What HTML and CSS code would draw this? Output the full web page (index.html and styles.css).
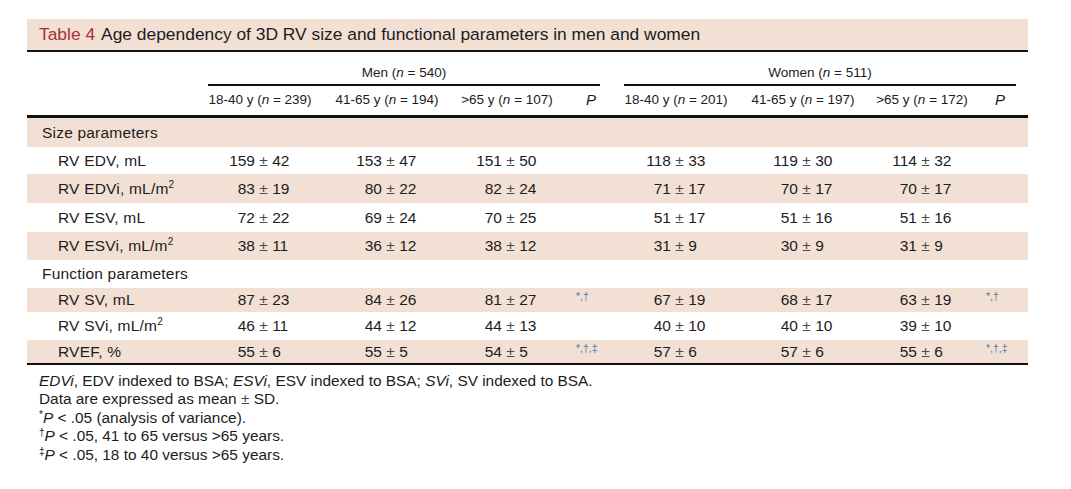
FILE: index.html
```html
<!DOCTYPE html>
<html lang="en">
<head>
<meta charset="utf-8">
<title>Table 4</title>
<link rel="stylesheet" href="styles.css">
</head>
<body>
<div class="page">
  <div class="title"><span class="tno">Table 4</span>Age dependency of 3D RV size and functional parameters in men and women</div>

  <div class="grid groups">
    <div></div>
    <div class="g men">Men (<i>n</i> = 540)</div>
    <div class="g women">Women (<i>n</i> = 511)</div>
  </div>

  <div class="grid subs">
    <div></div>
    <div>18-40 y (<i>n</i> = 239)</div>
    <div>41-65 y (<i>n</i> = 194)</div>
    <div>&gt;65 y (<i>n</i> = 107)</div>
    <div class="ph"><i>P</i></div>
    <div>18-40 y (<i>n</i> = 201)</div>
    <div>41-65 y (<i>n</i> = 197)</div>
    <div>&gt;65 y (<i>n</i> = 172)</div>
    <div class="ph"><i>P</i></div>
  </div>

  <div class="grid row band h29"><div class="sec">Size parameters</div></div>

  <div class="grid row h27">
    <div class="lbl">RV EDV, mL</div>
    <div class="c"><span class="v"><span class="l">159</span> <span class="pm">±</span> 42</span></div>
    <div class="c"><span class="v"><span class="l">153</span> <span class="pm">±</span> 47</span></div>
    <div class="c"><span class="v"><span class="l">151</span> <span class="pm">±</span> 50</span></div>
    <div></div>
    <div class="c"><span class="v"><span class="l">118</span> <span class="pm">±</span> 33</span></div>
    <div class="c"><span class="v"><span class="l">119</span> <span class="pm">±</span> 30</span></div>
    <div class="c"><span class="v"><span class="l">114</span> <span class="pm">±</span> 32</span></div>
    <div></div>
  </div>

  <div class="grid row band h29">
    <div class="lbl">RV EDVi, mL/m<sup>2</sup></div>
    <div class="c"><span class="v"><span class="l">83</span> <span class="pm">±</span> 19</span></div>
    <div class="c"><span class="v"><span class="l">80</span> <span class="pm">±</span> 22</span></div>
    <div class="c"><span class="v"><span class="l">82</span> <span class="pm">±</span> 24</span></div>
    <div></div>
    <div class="c"><span class="v"><span class="l">71</span> <span class="pm">±</span> 17</span></div>
    <div class="c"><span class="v"><span class="l">70</span> <span class="pm">±</span> 17</span></div>
    <div class="c"><span class="v"><span class="l">70</span> <span class="pm">±</span> 17</span></div>
    <div></div>
  </div>

  <div class="grid row h29">
    <div class="lbl">RV ESV, mL</div>
    <div class="c"><span class="v"><span class="l">72</span> <span class="pm">±</span> 22</span></div>
    <div class="c"><span class="v"><span class="l">69</span> <span class="pm">±</span> 24</span></div>
    <div class="c"><span class="v"><span class="l">70</span> <span class="pm">±</span> 25</span></div>
    <div></div>
    <div class="c"><span class="v"><span class="l">51</span> <span class="pm">±</span> 17</span></div>
    <div class="c"><span class="v"><span class="l">51</span> <span class="pm">±</span> 16</span></div>
    <div class="c"><span class="v"><span class="l">51</span> <span class="pm">±</span> 16</span></div>
    <div></div>
  </div>

  <div class="grid row band h28">
    <div class="lbl">RV ESVi, mL/m<sup>2</sup></div>
    <div class="c"><span class="v"><span class="l">38</span> <span class="pm">±</span> 11</span></div>
    <div class="c"><span class="v"><span class="l">36</span> <span class="pm">±</span> 12</span></div>
    <div class="c"><span class="v"><span class="l">38</span> <span class="pm">±</span> 12</span></div>
    <div></div>
    <div class="c"><span class="v"><span class="l">31</span> <span class="pm">±</span> 9</span></div>
    <div class="c"><span class="v"><span class="l">30</span> <span class="pm">±</span> 9</span></div>
    <div class="c"><span class="v"><span class="l">31</span> <span class="pm">±</span> 9</span></div>
    <div></div>
  </div>

  <div class="grid row h28"><div class="sec">Function parameters</div></div>

  <div class="grid row band h24">
    <div class="lbl">RV SV, mL</div>
    <div class="c"><span class="v"><span class="l">87</span> <span class="pm">±</span> 23</span></div>
    <div class="c"><span class="v"><span class="l">84</span> <span class="pm">±</span> 26</span></div>
    <div class="c"><span class="v"><span class="l">81</span> <span class="pm">±</span> 27</span></div>
    <div class="p">*,†</div>
    <div class="c"><span class="v"><span class="l">67</span> <span class="pm">±</span> 19</span></div>
    <div class="c"><span class="v"><span class="l">68</span> <span class="pm">±</span> 17</span></div>
    <div class="c"><span class="v"><span class="l">63</span> <span class="pm">±</span> 19</span></div>
    <div class="p">*,†</div>
  </div>

  <div class="grid row h28">
    <div class="lbl">RV SVi, mL/m<sup>2</sup></div>
    <div class="c"><span class="v"><span class="l">46</span> <span class="pm">±</span> 11</span></div>
    <div class="c"><span class="v"><span class="l">44</span> <span class="pm">±</span> 12</span></div>
    <div class="c"><span class="v"><span class="l">44</span> <span class="pm">±</span> 13</span></div>
    <div></div>
    <div class="c"><span class="v"><span class="l">40</span> <span class="pm">±</span> 10</span></div>
    <div class="c"><span class="v"><span class="l">40</span> <span class="pm">±</span> 10</span></div>
    <div class="c"><span class="v"><span class="l">39</span> <span class="pm">±</span> 10</span></div>
    <div></div>
  </div>

  <div class="grid row band h23 last">
    <div class="lbl">RVEF, %</div>
    <div class="c"><span class="v"><span class="l">55</span> <span class="pm">±</span> 6</span></div>
    <div class="c"><span class="v"><span class="l">55</span> <span class="pm">±</span> 5</span></div>
    <div class="c"><span class="v"><span class="l">54</span> <span class="pm">±</span> 5</span></div>
    <div class="p">*,†,‡</div>
    <div class="c"><span class="v"><span class="l">57</span> <span class="pm">±</span> 6</span></div>
    <div class="c"><span class="v"><span class="l">57</span> <span class="pm">±</span> 6</span></div>
    <div class="c"><span class="v"><span class="l">55</span> <span class="pm">±</span> 6</span></div>
    <div class="p">*,†,‡</div>
  </div>

  <div class="notes">
    <p><i>EDVi</i>, EDV indexed to BSA; <i>ESVi</i>, ESV indexed to BSA; <i>SVi</i>, SV indexed to BSA.</p>
    <p>Data are expressed as mean <span class="pm">±</span> SD.</p>
    <p><sup class="fm">*</sup><i>P</i> &lt; .05 (analysis of variance).</p>
    <p><sup class="fm">†</sup><i>P</i> &lt; .05, 41 to 65 versus &gt;65 years.</p>
    <p><sup class="fm">‡</sup><i>P</i> &lt; .05, 18 to 40 versus &gt;65 years.</p>
  </div>
</div>
</body>
</html>
```

FILE: styles.css
```css
html, body {
  margin: 0;
  padding: 0;
  background: #ffffff;
}

body {
  font-family: "Liberation Sans", Arial, Helvetica, sans-serif;
  color: #1c1c1c;
}

.page {
  margin-left: 27px;
  width: 1001px;
  padding-top: 19px;
}

.title {
  background: #f3e0d5;
  height: 31px;
  line-height: 31px;
  font-size: 17.4px;
  padding-left: 12px;
  border-bottom: 2px solid #111;
  white-space: nowrap;
}

.tno {
  color: #a8303a;
  margin-right: 6px;
}

.grid {
  display: grid;
  grid-template-columns: 173px 120px 134px 106px 60px 112px 142px 96px 58px;
}

.groups .g {
  font-size: 13.5px;
  line-height: 18px;
  padding: 12px 0 2px;
  border-bottom: 2px solid #111;
  text-align: center;
  white-space: nowrap;
}

.g.men {
  grid-column: 2 / 6;
  margin: 0 20px 0 8px;
}

.g.women {
  grid-column: 6 / 10;
  margin: 0 12px 0 4px;
}

.subs {
  border-bottom: 3px solid #111;
  font-size: 13.5px;
  line-height: 18px;
  padding: 5px 0 6px;
}

.subs > div {
  text-align: center;
  white-space: nowrap;
}

.subs .ph {
  font-size: 15px;
  padding-left: 2px;
}

.row {
  align-items: center;
  font-size: 15.5px;
  white-space: nowrap;
}

.row.band {
  background: #f3e0d5;
}

.h23 { height: 23px; }
.h24 { height: 24px; }
.h27 { height: 27px; }
.h28 { height: 28px; }
.h29 { height: 29px; }

.row.last {
  border-bottom: 2px solid #111;
}

.sec {
  grid-column: 1 / 10;
  padding-left: 15px;
  letter-spacing: 0.2px;
}

.lbl {
  padding-left: 31px;
  letter-spacing: 0.2px;
}

.lbl sup {
  font-size: 10px;
  line-height: 0;
  vertical-align: 6px;
}

.c {
  text-align: center;
}

.v {
  display: inline-block;
  width: 62px;
  text-align: left;
}

.l {
  display: inline-block;
  width: 26px;
  text-align: right;
}

.pm {
  color: #4a4a4a;
}

.p {
  align-self: start;
  padding: 3px 0 0 16px;
  font-size: 10.5px;
  line-height: 11px;
  color: #4f7fa3;
}

.notes {
  margin: 7px 0 0 12px;
  font-size: 15.4px;
  line-height: 18.4px;
}

.notes p {
  margin: 0;
}

.fm {
  font-size: 10px;
  line-height: 0;
  vertical-align: 5px;
}
```
